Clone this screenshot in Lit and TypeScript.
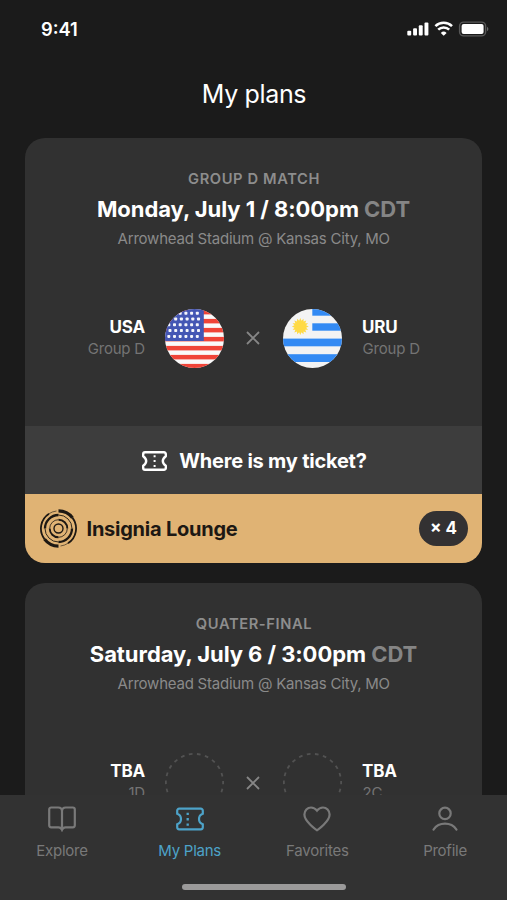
import { LitElement, html, svg, css, nothing } from "lit";
import { customElement, property } from "lit/decorators.js";

const usaStripes = [0, 1, 2, 3, 4, 5, 6].map((i) => 0.9 + i * 9);
const usaStars = [4.2, 10, 15.8, 21.6, 27.4].flatMap((y, row) =>
  [0, 1, 2, 3, 4, 5, 6].map((i) => ({ x: (row % 2 ? 5 : 3.8) + i * 5.7, y })).filter((s) => s.x < 36)
);

const flagUsa = html`<svg class="flag" viewBox="0 0 59 59">
  <clipPath id="c"><circle cx="29.5" cy="29.5" r="29.5" /></clipPath>
  <g clip-path="url(#c)">
    <rect width="59" height="59" fill="#fafafa" />
    ${usaStripes.map((y) => svg`<rect y=${y} width="59" height="4.5" fill="#f04438" />`)}
    <rect width="38.8" height="32" fill="#4456b4" />
    ${usaStars.map((s) => svg`<rect x=${s.x - 1.5} y=${s.y - 1.5} width="3" height="3" rx="0.8" fill="#f4f5fb" />`)}
  </g>
</svg>`;

const sunPoints = Array.from({ length: 32 }, (_, i) => {
  const r = i % 2 ? 5.9 : 8.4;
  const a = (i * Math.PI) / 16;
  return `${(17.3 + r * Math.cos(a)).toFixed(2)},${(17.5 + r * Math.sin(a)).toFixed(2)}`;
}).join(" ");

const flagUruguay = html`<svg class="flag" viewBox="0 0 59 59">
  <clipPath id="c"><circle cx="29.5" cy="29.5" r="29.5" /></clipPath>
  <g clip-path="url(#c)">
    <rect width="59" height="59" fill="#f3f3f3" />
    <rect x="29.3" y="0" width="30" height="6.7" fill="#338af3" />
    <rect x="29.3" y="14.3" width="30" height="7.4" fill="#338af3" />
    <rect y="29.6" width="59" height="7.7" fill="#338af3" />
    <rect y="45.2" width="59" height="7.8" fill="#338af3" />
    <polygon points=${sunPoints} fill="#ffda44" />
  </g>
</svg>`;

const flagEmpty = html`<svg class="flag" viewBox="0 0 59 59">
  <circle cx="29.5" cy="29.5" r="28.6" fill="none" stroke="#525252" stroke-width="1.8"
    stroke-dasharray="3.7 4.468" stroke-dashoffset="1.85" />
</svg>`;

const cross = html`<svg class="cross" viewBox="0 0 14 14">
  <path d="M1 1 13 13M13 1 1 13" stroke="#868686" stroke-width="1.8" fill="none" />
</svg>`;

const logo = html`<svg class="logo" viewBox="-19.5 -19.5 39 39" fill="none" stroke="#1d1813">
  <path d="M0-17.6A17.6 17.6 0 0 1 14-10.6" stroke-width="3.2" />
  <path d="M14-10.6A17.6 17.6 0 0 1 9.5 14.8" stroke-width="1.8" />
  <path d="M0 17.6A17.6 17.6 0 0 1-14 10.6" stroke-width="3.2" />
  <path d="M-14 10.6A17.6 17.6 0 0 1-9.5-14.8" stroke-width="1.8" />
  <path d="M-9.5-14.8A17.6 17.6 0 0 1-2-17.5M9.5 14.8A17.6 17.6 0 0 1 2 17.5" stroke-width=".6" />
  <path d="M-13.5 0A13.5 13.5 0 0 1 0-13.5M13.5 0A13.5 13.5 0 0 1 0 13.5" stroke-width="2.3" />
  <path d="M0-13.5A13.5 13.5 0 0 1 13.5 0M0 13.5A13.5 13.5 0 0 1-13.5 0" stroke-width=".9" />
  <path d="M0-8.8A8.8 8.8 0 0 1 8.8 0M0 8.8A8.8 8.8 0 0 1-8.8 0" stroke-width="1.9" />
  <path d="M8.8 0A8.8 8.8 0 0 1 0 8.8M-8.8 0A8.8 8.8 0 0 1 0-8.8" stroke-width=".8" />
  <circle r="4.5" stroke-width="1.4" />
</svg>`;

const ticketWhite = html`<svg class="ticket" viewBox="0 0 25 20" fill="none" stroke="#fff">
  <path d="M3 1.2H22A1.8 1.8 0 0 1 23.8 3V5.2Q20.8 7.4 20.8 10T23.8 14.8V17A1.8 1.8 0 0 1 22 18.8H3A1.8 1.8 0 0 1 1.2 17V14.8Q4.2 12.6 4.2 10T1.2 5.2V3A1.8 1.8 0 0 1 3 1.2Z" stroke-width="2.4" stroke-linejoin="round" />
  <path d="M12.6 4.2V16" stroke-width="2" stroke-dasharray="2 2.9" />
</svg>`;

const iconExplore = svg`<path d="M14 5.2C14 3 12.5 1.5 10.3 1.5H3.2A2 2 0 0 0 1.2 3.5V19.3A2 2 0 0 0 3.2 21.3H10.5C12.5 21.3 13.3 22.2 14 23.8C14.7 22.2 15.5 21.3 17.5 21.3H24.8A2 2 0 0 0 26.8 19.3V3.5A2 2 0 0 0 24.8 1.5H17.7C15.5 1.5 14 3 14 5.2ZM14 5.2V23" />`;
const iconPlans = svg`<path d="M3.2 2.7H24.8A2 2 0 0 1 26.8 4.7V7.7A5.6 5.6 0 0 0 26.8 18.3V21.3A2 2 0 0 1 24.8 23.3H3.2A2 2 0 0 1 1.2 21.3V18.3A5.6 5.6 0 0 0 1.2 7.7V4.7A2 2 0 0 1 3.2 2.7Z" />
  <path d="M11.7 6.8V20" stroke-width="2.3" stroke-dasharray="2.3 3" />`;
const iconHeart = svg`<path d="M14 24.2C13 23.7 1.4 15.5 1.4 8.6C1.4 4.6 4.5 1.5 8 1.5C10.5 1.5 12.4 2.5 14 4.6C15.6 2.5 17.5 1.5 20 1.5C23.5 1.5 26.6 4.6 26.6 8.6C26.6 15.5 15 23.7 14 24.2Z" />`;
const iconProfile = svg`<circle cx="14" cy="7.4" r="5.7" />
  <path d="M2.5 23.6C5 20 9.1 17.7 14 17.7S23 20 25.5 23.6" stroke-linecap="round" />`;

interface Team {
  name: string;
  note: string;
  flag: unknown;
}

@customElement("match-card")
class MatchCard extends LitElement {
  @property() stage = "";
  @property() when = "";
  @property({ attribute: false }) home!: Team;
  @property({ attribute: false }) away!: Team;
  @property({ type: Boolean }) ticket = false;

  static styles = css`
    :host { display: block; }
    .card { border-radius: 20px; background: #313131; overflow: hidden; }
    .body { box-sizing: border-box; height: 288px; padding-top: 30px; text-align: center; }
    .stage { font-size: 14.7px; line-height: 22px; font-weight: 600; letter-spacing: 0.6px; color: #8d8d8d; padding-left: 1px; }
    .when { margin-top: 4px; font-size: 22px; line-height: 30px; font-weight: 700; letter-spacing: -0.05px; color: #fff; white-space: nowrap; }
    .zone { color: #858585; }
    .place { margin-top: 5px; font-size: 15px; line-height: 20px; color: #8a8a8a; letter-spacing: -0.22px; padding-left: 0.5px; }
    .teams {
      display: grid; grid-template-columns: 139.5px 59px 59.5px 59px 1fr;
      align-items: center; margin-top: 59.5px;
    }
    .team { padding-bottom: 1.5px; }
    .team:first-child { padding-right: 19.5px; text-align: right; }
    .team:last-child { padding-left: 20px; text-align: left; }
    .name { font-size: 17px; line-height: 22px; font-weight: 700; letter-spacing: -0.2px; color: #fff; }
    .note { font-size: 15px; line-height: 21px; letter-spacing: -0.2px; color: #747474; }
    .team:last-child .note { padding-left: 0.5px; }
    .flag { display: block; width: 59px; height: 59px; }
    .cross { display: block; width: 14px; height: 14px; justify-self: center; }
    .action {
      display: flex; align-items: center; justify-content: center; gap: 12.5px;
      box-sizing: border-box; height: 68px; padding: 2px 0 0 1.5px;
      background: #3d3d3d; color: #fff; font-size: 20px; font-weight: 700; letter-spacing: -0.22px;
    }
    .ticket { width: 25px; height: 20px; }
    .lounge {
      display: flex; align-items: center; box-sizing: border-box; height: 69px;
      padding: 0 14px; background: #e0b374; color: #1d1813;
      font-size: 20px; font-weight: 700; letter-spacing: -0.24px;
    }
    .logo { width: 39px; height: 39px; margin-right: 8.5px; }
    .count {
      margin-left: auto; width: 49px; height: 35px; border-radius: 18px; background: #333132;
      color: #fff; font-size: 17px; line-height: 35px; letter-spacing: 0; text-align: center;
    }
  `;

  team(t: Team) {
    return html`<div class="team"><div class="name">${t.name}</div><div class="note">${t.note}</div></div>`;
  }

  render() {
    return html`<div class="card">
      <div class="body">
        <div class="stage">${this.stage}</div>
        <div class="when">${this.when} <span class="zone">CDT</span></div>
        <div class="place">Arrowhead Stadium @ Kansas City, MO</div>
        <div class="teams">
          ${this.team(this.home)}${this.home.flag}${cross}${this.away.flag}${this.team(this.away)}
        </div>
      </div>
      ${this.ticket
        ? html`<div class="action">${ticketWhite}<span>Where is my ticket?</span></div>
            <div class="lounge">${logo}<span>Insignia Lounge</span><span class="count">× 4</span></div>`
        : nothing}
    </div>`;
  }
}

const tabs = [
  { label: "Explore", icon: iconExplore, active: false },
  { label: "My Plans", icon: iconPlans, active: true },
  { label: "Favorites", icon: iconHeart, active: false },
  { label: "Profile", icon: iconProfile, active: false },
];

@customElement("app-root")
class AppRoot extends LitElement {
  static styles = css`
    :host {
      display: flex; flex-direction: column; height: 900px; overflow: hidden;
      background: #1b1b1b; font-family: Inter, "Liberation Sans", sans-serif;
    }
    .status {
      display: flex; align-items: center; justify-content: space-between; flex: none;
      box-sizing: border-box; height: 58px; padding: 0 17px 0 41px;
    }
    .time { color: #fff; font-size: 18.3px; font-weight: 600; }
    .indicators { width: 84px; height: 18px; }
    .title {
      flex: none; height: 80px; line-height: 72px; text-align: center;
      color: #fff; font-size: 25px; letter-spacing: -0.35px; padding-left: 1px;
    }
    .list {
      flex: 1; min-height: 0; overflow: hidden; display: flex; flex-direction: column;
      gap: 19.5px; padding: 0 25px;
    }
    .tabbar { flex: none; box-sizing: border-box; height: 105px; background: #323232; padding-top: 11px; }
    .tabs { display: grid; grid-template-columns: repeat(4, 127.7px); justify-content: center; }
    .tab { display: flex; flex-direction: column; align-items: center; color: #797979; }
    .active { color: #4da3c9; }
    .icon { width: 28px; height: 26px; fill: none; stroke: currentColor; stroke-width: 2.2; }
    .label { margin-top: 9px; font-size: 15px; line-height: 20px; letter-spacing: -0.25px; }
    .bar { width: 163.5px; height: 6.5px; border-radius: 4px; background: #9b9a9a; margin: 22.5px auto 0 182px; }
  `;

  render() {
    return html`
      <div class="status">
        <span class="time">9:41</span>
        <svg class="indicators" viewBox="0 0 84 18">
          <g fill="#fff">
            <rect x="1.3" y="10.7" width="3.9" height="4.8" rx="1" />
            <rect x="7.1" y="8.3" width="3.9" height="7.2" rx="1" />
            <rect x="12.8" y="5.3" width="3.9" height="10.2" rx="1" />
            <rect x="18.5" y="2.5" width="3.9" height="13" rx="1" />
            <path d="M37.7 15.8 34.8 12.9A4.2 4.2 0 0 1 40.6 12.9Z" />
          </g>
          <path d="M29.4 6.1A11.8 11.8 0 0 1 46 6.1M32.2 9.7A7.7 7.7 0 0 1 43.2 9.7" fill="none" stroke="#fff" stroke-width="2.5" />
          <rect x="53.6" y="2.1" width="26" height="13.8" rx="4" fill="none" stroke="#585858" stroke-width="1.4" />
          <rect x="55.6" y="4.1" width="22" height="9.8" rx="2" fill="#fff" />
          <path d="M81 6.7A2.6 2.6 0 0 1 81 11.3Z" fill="#686868" />
        </svg>
      </div>
      <div class="title">My plans</div>
      <div class="list">
        <match-card
          stage="GROUP D MATCH"
          when="Monday, July 1 / 8:00pm"
          .home=${{ name: "USA", note: "Group D", flag: flagUsa }}
          .away=${{ name: "URU", note: "Group D", flag: flagUruguay }}
          ticket
        ></match-card>
        <match-card
          stage="QUATER-FINAL"
          when="Saturday, July 6 / 3:00pm"
          .home=${{ name: "TBA", note: "1D", flag: flagEmpty }}
          .away=${{ name: "TBA", note: "2C", flag: flagEmpty }}
        ></match-card>
      </div>
      <div class="tabbar">
        <div class="tabs">
          ${tabs.map(
            (t) => html`<div class="tab ${t.active ? "active" : ""}">
              <svg class="icon" viewBox="0 0 28 26">${t.icon}</svg>
              <span class="label">${t.label}</span>
            </div>`
          )}
        </div>
        <div class="bar"></div>
      </div>
    `;
  }
}
